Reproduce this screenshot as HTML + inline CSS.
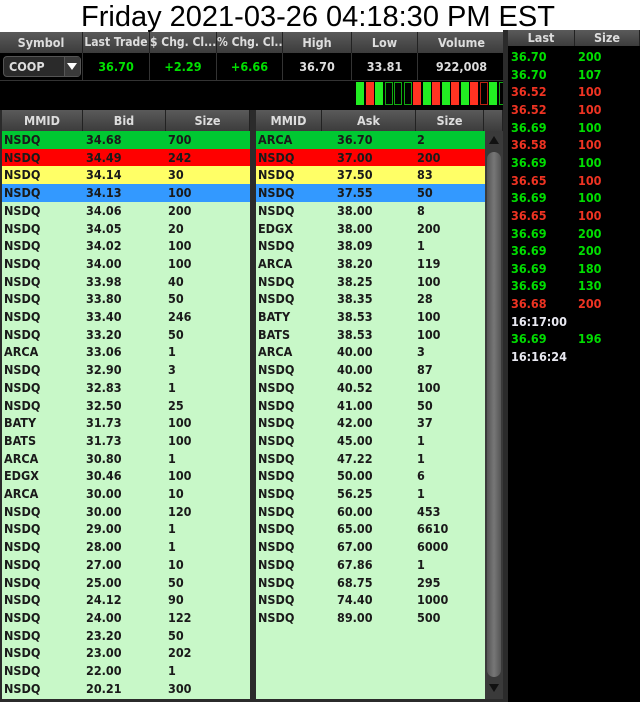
<!DOCTYPE html>
<html><head><meta charset="utf-8"><style>
*{margin:0;padding:0;box-sizing:border-box}
body{width:640px;height:702px;background:#000;position:relative;overflow:hidden;font-family:"DejaVu Sans Condensed","Liberation Sans Narrow","Liberation Sans",sans-serif;font-size:12.5px}
.a{position:absolute}
.title{left:0;top:0;width:640px;height:32px;background:#fff;text-align:center;font-family:"Liberation Sans",sans-serif;font-size:29px;line-height:34px;color:#000;padding-right:4px;white-space:nowrap}
.hd{background:linear-gradient(#5a5a5a,#3c3c3c);color:#ddd;text-align:center;border-right:1px solid #222;height:21px;line-height:21px;font-weight:bold;white-space:nowrap;overflow:hidden}
.val{color:#00e000;text-align:center;line-height:27px;border-right:1px solid #333;height:27px;font-weight:bold}
.row{position:absolute;height:17.7px;line-height:17.7px;font-weight:bold;color:#1a1a1a}
.row span{position:absolute}
.ts{position:absolute;height:17.65px;line-height:17.65px;font-weight:bold}
.ts span{position:absolute}
</style></head><body>
<div class="a title">Friday 2021-03-26 04:18:30 PM EST</div>
<div class="a" style="left:0;top:32px;width:506px;height:80px;background:#000"></div>
<div class="a hd" style="left:0;top:32px;width:83px">Symbol</div>
<div class="a hd" style="left:83px;top:32px;width:67px;font-size:12px">Last Trade</div>
<div class="a hd" style="left:150px;top:32px;width:67px;text-align:left;font-size:12px">$ Chg. Cl...</div>
<div class="a hd" style="left:217px;top:32px;width:66px;text-align:left;font-size:12px">% Chg. Cl...</div>
<div class="a hd" style="left:283px;top:32px;width:69px">High</div>
<div class="a hd" style="left:352px;top:32px;width:66px">Low</div>
<div class="a hd" style="left:418px;top:32px;width:88px">Volume</div>
<div class="a" style="left:0;top:53px;width:83px;height:27px;border-right:1px solid #333"></div>
<div class="a" style="left:3px;top:56px;width:78px;height:21px;background:#2a2a2a;border:1px solid #555;border-radius:4px;color:#ddd;font-weight:bold;line-height:19px;padding-left:5px">COOP<span style="position:absolute;left:60px;top:0;width:16px;height:19px;border-left:1px solid #555;background:#3a3a3a"></span><span style="position:absolute;left:63px;top:6px;width:0;height:0;border-left:5px solid transparent;border-right:5px solid transparent;border-top:7px solid #fff"></span></div>
<div class="a val" style="left:83px;top:53px;width:67px">36.70</div>
<div class="a val" style="left:150px;top:53px;width:67px">+2.29</div>
<div class="a val" style="left:217px;top:53px;width:66px">+6.66</div>
<div class="a val" style="left:283px;top:53px;width:69px;color:#ddd">36.70</div>
<div class="a val" style="left:352px;top:53px;width:66px;color:#ddd">33.81</div>
<div class="a val" style="left:418px;top:53px;width:88px;color:#ddd">922,008</div>
<div class="a" style="left:0;top:80px;width:506px;height:1px;background:#333"></div>
<div id="bars"></div>
<div class="a" style="left:0;top:110px;width:508px;height:592px;background:#2b2b2b"></div>
<div class="a" style="left:503px;top:30px;width:5px;height:672px;background:#2b2b2b"></div>
<div class="a" style="left:2px;top:110px;width:248px;height:589px;background:#c8f8c8"></div>
<div class="a" style="left:256px;top:110px;width:247px;height:589px;background:#c8f8c8"></div>
<div class="a hd" style="left:2px;top:110px;width:81px">MMID</div>
<div class="a hd" style="left:83px;top:110px;width:83px">Bid</div>
<div class="a hd" style="left:166px;top:110px;width:84px">Size</div>
<div class="a hd" style="left:256px;top:110px;width:66px">MMID</div>
<div class="a hd" style="left:322px;top:110px;width:94px">Ask</div>
<div class="a hd" style="left:416px;top:110px;width:68px">Size</div>
<div class="a hd" style="left:484px;top:110px;width:19px"></div>
<div class="a" style="left:485px;top:131px;width:18px;height:568px;background:#3a3a3a"></div>
<div class="a" style="left:487px;top:152px;width:14px;height:525px;background:linear-gradient(90deg,#555,#777,#555);border-radius:7px"></div>
<div class="a" style="left:489px;top:136px;width:0;height:0;border-left:5px solid transparent;border-right:5px solid transparent;border-bottom:8px solid #111"></div>
<div class="a" style="left:489px;top:684px;width:0;height:0;border-left:5px solid transparent;border-right:5px solid transparent;border-top:8px solid #111"></div>
<div id="L"></div><div id="R"></div>
<div class="a hd" style="left:508px;top:30px;width:67px;height:16px;line-height:16px">Last</div>
<div class="a hd" style="left:575px;top:30px;width:65px;height:16px;line-height:16px">Size</div>
<div id="T"></div>
<script>
var cols=['#00c832','#ff0000','#ffff66','#3399ff'];
var L=[["NSDQ","34.68","700"],["NSDQ","34.49","242"],["NSDQ","34.14","30"],["NSDQ","34.13","100"],["NSDQ","34.06","200"],["NSDQ","34.05","20"],["NSDQ","34.02","100"],["NSDQ","34.00","100"],["NSDQ","33.98","40"],["NSDQ","33.80","50"],["NSDQ","33.40","246"],["NSDQ","33.20","50"],["ARCA","33.06","1"],["NSDQ","32.90","3"],["NSDQ","32.83","1"],["NSDQ","32.50","25"],["BATY","31.73","100"],["BATS","31.73","100"],["ARCA","30.80","1"],["EDGX","30.46","100"],["ARCA","30.00","10"],["NSDQ","30.00","120"],["NSDQ","29.00","1"],["NSDQ","28.00","1"],["NSDQ","27.00","10"],["NSDQ","25.00","50"],["NSDQ","24.12","90"],["NSDQ","24.00","122"],["NSDQ","23.20","50"],["NSDQ","23.00","202"],["NSDQ","22.00","1"],["NSDQ","20.21","300"]];
var R=[["ARCA","36.70","2"],["NSDQ","37.00","200"],["NSDQ","37.50","83"],["NSDQ","37.55","50"],["NSDQ","38.00","8"],["EDGX","38.00","200"],["NSDQ","38.09","1"],["ARCA","38.20","119"],["NSDQ","38.25","100"],["NSDQ","38.35","28"],["BATY","38.53","100"],["BATS","38.53","100"],["ARCA","40.00","3"],["NSDQ","40.00","87"],["NSDQ","40.52","100"],["NSDQ","41.00","50"],["NSDQ","42.00","37"],["NSDQ","45.00","1"],["NSDQ","47.22","1"],["NSDQ","50.00","6"],["NSDQ","56.25","1"],["NSDQ","60.00","453"],["NSDQ","65.00","6610"],["NSDQ","67.00","6000"],["NSDQ","67.86","1"],["NSDQ","68.75","295"],["NSDQ","74.40","1000"],["NSDQ","89.00","500"]];
function tbl(d,x,w,o){var h='';d.forEach(function(r,i){var bg=i<4?'background:'+cols[i]+';':'';h+='<div class="row" style="left:'+x+'px;width:'+w+'px;top:'+(131+i*17.7)+'px;'+bg+'"><span style="left:2px">'+r[0]+'</span><span style="left:'+o[0]+'px">'+r[1]+'</span><span style="left:'+o[1]+'px">'+r[2]+'</span></div>';});return h;}
document.getElementById('L').innerHTML=tbl(L,2,248,[84,166]);
document.getElementById('R').innerHTML=tbl(R,256,229,[81,161]);
var G='#00dd00',Rd='#ee3322',W='#e8e8f0';
var T=[["36.70","200",G],["36.70","107",G],["36.52","100",Rd],["36.52","100",Rd],["36.69","100",G],["36.58","100",Rd],["36.69","100",G],["36.65","100",Rd],["36.69","100",G],["36.65","100",Rd],["36.69","200",G],["36.69","200",G],["36.69","180",G],["36.69","130",G],["36.68","200",Rd],["16:17:00","",W],["36.69","196",G],["16:16:24","",W]];
var h='';T.forEach(function(r,i){h+='<div class="ts" style="left:508px;width:132px;top:'+(48+i*17.65)+'px;color:'+r[2]+'"><span style="left:3px">'+r[0]+'</span><span style="left:70px">'+r[1]+'</span></div>';});
document.getElementById('T').innerHTML=h;
var P="GRGgggRGRGRGRrGg",b='';
for(var i=0;i<P.length;i++){var c=P[i],col=(c=='G'||c=='g')?'#22ee22':'#ff3322',fill=(c=='G'||c=='R');
b+='<div class="a" style="left:'+(356+i*9.5)+'px;top:82px;width:8px;height:23px;'+(fill?'background:'+col:'border:1px solid '+(c=='g'?'#11aa11':'#bb2211'))+'"></div>';}
document.getElementById('bars').innerHTML=b;
</script>
</body></html>
